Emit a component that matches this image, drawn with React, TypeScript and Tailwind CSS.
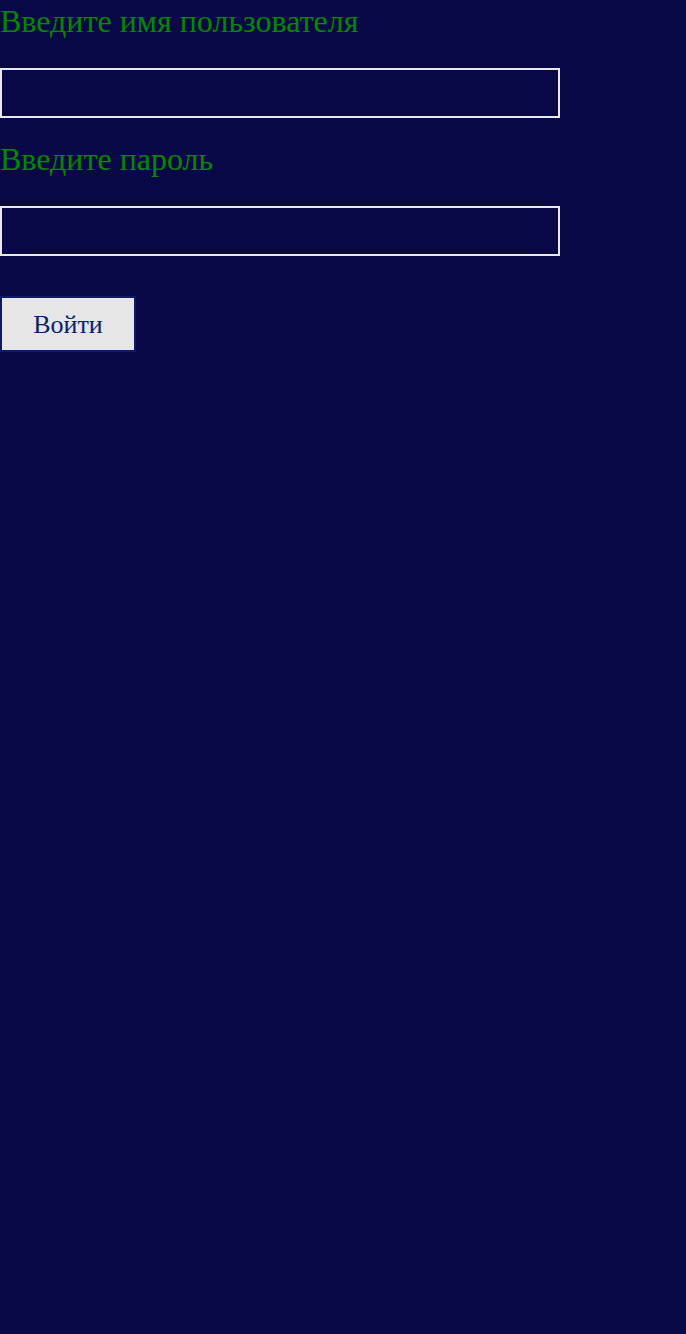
export default function App() {
  return (
    <div className="min-h-[1334px] w-full bg-[#090847]" style={{ fontFamily: '"Liberation Serif", serif' }}>
      <div className="flex flex-col items-start">
        <label className="pt-[3px] text-[32px] leading-[37px] text-[#008a00]">Введите имя пользователя</label>
        <input className="mt-[28px] h-[50px] w-[560px] border-2 border-[#e8e8e8] bg-transparent outline-none" />
        <label className="mt-[20px] pt-[3px] text-[32px] leading-[37px] text-[#008a00]">Введите пароль</label>
        <input type="password" className="mt-[28px] h-[50px] w-[560px] border-2 border-[#e8e8e8] bg-transparent outline-none" />
        <button className="mt-[40px] flex h-[56px] w-[136px] items-center justify-center border-2 border-[#0b1a6b] bg-[#e6e6e7] text-[26px] text-[#0b1f6b]">
          Войти
        </button>
      </div>
    </div>
  );
}
